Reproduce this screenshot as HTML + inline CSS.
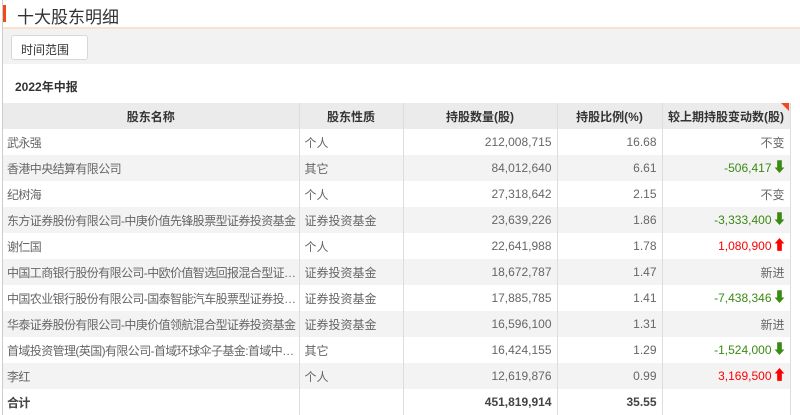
<!DOCTYPE html>
<html><head><meta charset="utf-8"><style>
*{margin:0;padding:0;box-sizing:border-box}
body{width:800px;height:415px;overflow:hidden;background:#fff;font-family:"Liberation Sans","Noto Sans CJK SC",sans-serif;font-size:12px;color:#666;position:relative}
.lb{position:absolute;left:2px;top:0;width:1px;height:415px;background:#ccc}
.title{position:absolute;left:3px;top:0;width:797px;height:29px;border-bottom:2px solid #fde0cf}
.title .acc{position:absolute;left:0;top:5px;width:3px;height:17px;background:#f04a1b}
.title span{position:absolute;left:14px;top:3px;font-size:17px;color:#333}
.bar{position:absolute;left:3px;top:29px;width:797px;height:35px;background:#f2f2f2}
.btn{position:absolute;left:8px;top:6px;width:77px;height:25px;background:#fff;border:1px solid #d8d8d8;border-radius:3px;font-size:12px;color:#333;padding:5px 0 0 9px}
.rep{position:absolute;left:15px;top:78px;font-weight:bold;color:#333;font-size:12px}
table{position:absolute;left:3px;top:103px;width:787px;border-collapse:collapse;table-layout:fixed}
td,th{height:26px;border-right:1px solid #ddd;padding:0 5px;white-space:nowrap;overflow:hidden}
td:first-child{padding-left:4px;padding-right:2px;letter-spacing:-0.6px}
th{background:#ebebeb;color:#333;font-weight:bold;text-align:center;border-right:1px solid #ddd;letter-spacing:0}
tr:nth-child(odd) td{background:#f3f3f3}
.r{text-align:right}
.g{color:#3a8a14}.red{color:#f00}
.b td{font-weight:bold;color:#444}
.ar{display:inline-block;width:12px;text-align:center;font-weight:bold;font-size:14px;margin-left:1px;line-height:12px}
.tri{position:absolute;left:781px;top:103px;width:0;height:0;border-left:8px solid transparent;border-top:8px solid #f04a1b}
</style></head><body>
<div class="lb"></div>
<div class="title"><div class="acc"></div><span>十大股东明细</span></div>
<div class="bar"><div class="btn">时间范围</div></div>
<div class="rep">2022年中报</div>
<table>
<colgroup><col style="width:296px"><col style="width:104px"><col style="width:154px"><col style="width:105px"><col style="width:128px"></colgroup>
<tr><th>股东名称</th><th>股东性质</th><th>持股数量(股)</th><th>持股比例(%)</th><th>较上期持股变动数(股)</th></tr>
<tr><td>武永强</td><td>个人</td><td class="r">212,008,715</td><td class="r">16.68</td><td class="r">不变</td></tr>
<tr><td>香港中央结算有限公司</td><td>其它</td><td class="r">84,012,640</td><td class="r">6.61</td><td class="r g">-506,417<span class="ar">⬇</span></td></tr>
<tr><td>纪树海</td><td>个人</td><td class="r">27,318,642</td><td class="r">2.15</td><td class="r">不变</td></tr>
<tr><td>东方证券股份有限公司-中庚价值先锋股票型证券投资基金</td><td>证券投资基金</td><td class="r">23,639,226</td><td class="r">1.86</td><td class="r g">-3,333,400<span class="ar">⬇</span></td></tr>
<tr><td>谢仁国</td><td>个人</td><td class="r">22,641,988</td><td class="r">1.78</td><td class="r red">1,080,900<span class="ar">⬆</span></td></tr>
<tr><td>中国工商银行股份有限公司-中欧价值智选回报混合型证…</td><td>证券投资基金</td><td class="r">18,672,787</td><td class="r">1.47</td><td class="r">新进</td></tr>
<tr><td>中国农业银行股份有限公司-国泰智能汽车股票型证券投…</td><td>证券投资基金</td><td class="r">17,885,785</td><td class="r">1.41</td><td class="r g">-7,438,346<span class="ar">⬇</span></td></tr>
<tr><td>华泰证券股份有限公司-中庚价值领航混合型证券投资基金</td><td>证券投资基金</td><td class="r">16,596,100</td><td class="r">1.31</td><td class="r">新进</td></tr>
<tr><td>首域投资管理(英国)有限公司-首域环球伞子基金:首域中…</td><td>其它</td><td class="r">16,424,155</td><td class="r">1.29</td><td class="r g">-1,524,000<span class="ar">⬇</span></td></tr>
<tr><td>李红</td><td>个人</td><td class="r">12,619,876</td><td class="r">0.99</td><td class="r red">3,169,500<span class="ar">⬆</span></td></tr>
<tr class="b"><td>合计</td><td></td><td class="r">451,819,914</td><td class="r">35.55</td><td></td></tr>
</table>
<div class="tri"></div>
</body></html>
